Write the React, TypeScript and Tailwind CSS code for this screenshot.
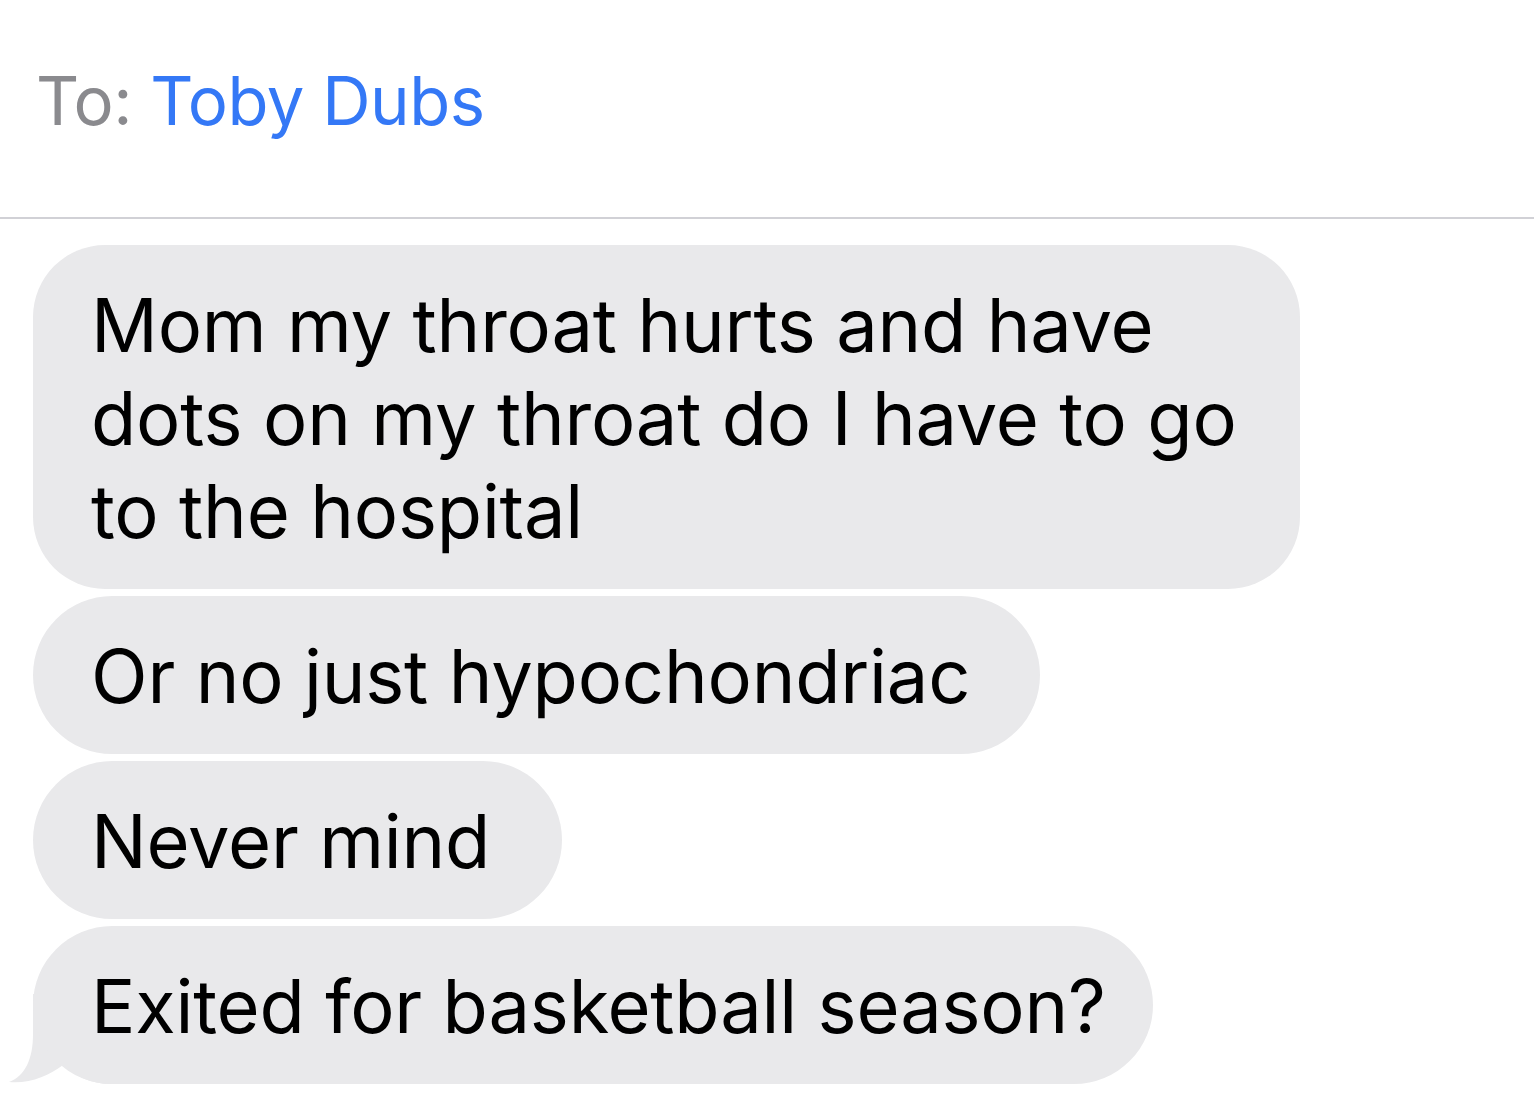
import React from 'react';

const MESSAGES = [
    { lines: ['Mom my throat hurts and have', 'dots on my throat do I have to go', 'to the hospital'], w: 'w-[1267px] rounded-[72px]' },
    { lines: ['Or no just hypochondriac'], w: 'w-[1007px] rounded-[80px]' },
    { lines: ['Never mind'], w: 'w-[529px] rounded-[80px]' },
    { lines: ['Exited for basketball season?'], w: 'w-[1120px] rounded-[80px]' },
];

const Bubble = ({ lines, w, tail }: { lines: string[]; w: string; tail?: boolean }) => {
    return (
        <div className="relative self-start">
            <div className={`relative z-10 ${w} bg-[#e9e9eb] pl-[58px] pt-[34px] pb-[31px] text-[74px] leading-[93px] tracking-[-0.2px] text-black whitespace-nowrap`}>
                {lines.map((line, i) => (
                    <div key={i}>{line}</div>
                ))}
            </div>
            {tail && (
                <svg className="absolute -left-[26px] bottom-0 z-0" width="130" height="90" viewBox="0 0 130 90">
                    <path
                        d="M26 0 L26 40 C26 65 18 82 2 88 C22 90 42 82 56 71 C68 82 85 90 103 90 L130 90 L130 0 Z"
                        fill="#e9e9eb"
                    />
                </svg>
            )}
        </div>
    );
};

export default function App() {
    return (
        <div className="min-h-screen bg-white font-['Inter','Noto_Sans',sans-serif]">
            <div className="h-[219px] border-b-2 border-[#d1d1d6] pl-[36px] pt-[61px] text-[67px] leading-[80px] tracking-[-0.5px]">
                <span className="text-[#8a8a8e]">To: </span>
                <span className="text-[#3478f6]">Toby Dubs</span>
            </div>
            <div className="flex flex-col gap-[7px] px-[33px] pt-[26px]">
                {MESSAGES.map((m, i) => (
                    <Bubble key={i} lines={m.lines} w={m.w} tail={i === MESSAGES.length - 1} />
                ))}
            </div>
        </div>
    );
}
